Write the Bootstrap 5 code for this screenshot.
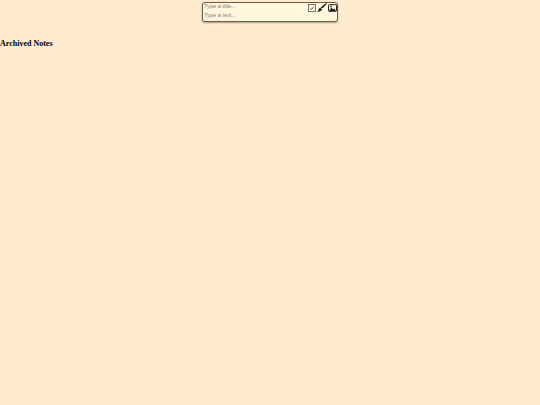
<!DOCTYPE html>
<html lang="en">
<head>
<meta charset="utf-8">
<title>Notes</title>
<link href="https://cdn.jsdelivr.net/npm/bootstrap@5.3.0/dist/css/bootstrap.min.css" rel="stylesheet">
<style>
body { background: #ffebcd; margin: 0; font-family: "Liberation Sans", sans-serif; color: #000; }
.note-box { width: 136px; height: 20px; margin-top: 2px; background: #fff6dc; border: 1px solid #6b5d4c; border-radius: 3px; box-shadow: 0 1px 2px rgba(0,0,0,.35); }
.note-field { font-size: 5.6px; line-height: 7px; color: #808080; padding-left: 1px; }
.note-row-top { height: 9px; }
.note-tools { gap: 1px; height: 9px; }
.note-tools svg { display: block; }
.arch-title { font-family: "Liberation Serif", serif; font-size: 8px; font-weight: 700; line-height: 10px; margin: 17px 0 0; }
</style>
</head>
<body>
<div class="d-flex justify-content-center">
  <div class="note-box">
    <div class="d-flex justify-content-between note-row-top">
      <div class="note-field">Type a title...</div>
      <div class="d-flex note-tools align-items-center">
        <svg width="8" height="8" viewBox="0 0 8 8"><rect x=".5" y=".5" width="7" height="7" fill="none" stroke="#555" stroke-width=".8"/><path d="M2 4l1.5 1.5L6 2.5" fill="none" stroke="#555" stroke-width=".8"/></svg>
        <svg width="10" height="9" viewBox="0 0 10 9"><path d="M9.2 0 10 .8 5.4 5.6 3.8 4.2z" fill="#222"/><path d="M3.2 4.6 5 6.2C4.6 8 2.2 9 .3 9 1.4 8 1.4 5.6 3.2 4.6z" fill="#222"/></svg>
        <svg width="9" height="8" viewBox="0 0 9 8"><rect x=".5" y=".7" width="8" height="6.6" rx=".6" fill="#fff6dc" stroke="#222" stroke-width="1"/><path d="M1 7l2.4-3.4L5 5.6 6.2 4.2 8 7z" fill="#222"/><circle cx="3" cy="2.4" r=".8" fill="#222"/></svg>
      </div>
    </div>
    <div class="note-field">Type a text...</div>
  </div>
</div>
<h2 class="arch-title">Archived Notes</h2>
</body>
</html>
